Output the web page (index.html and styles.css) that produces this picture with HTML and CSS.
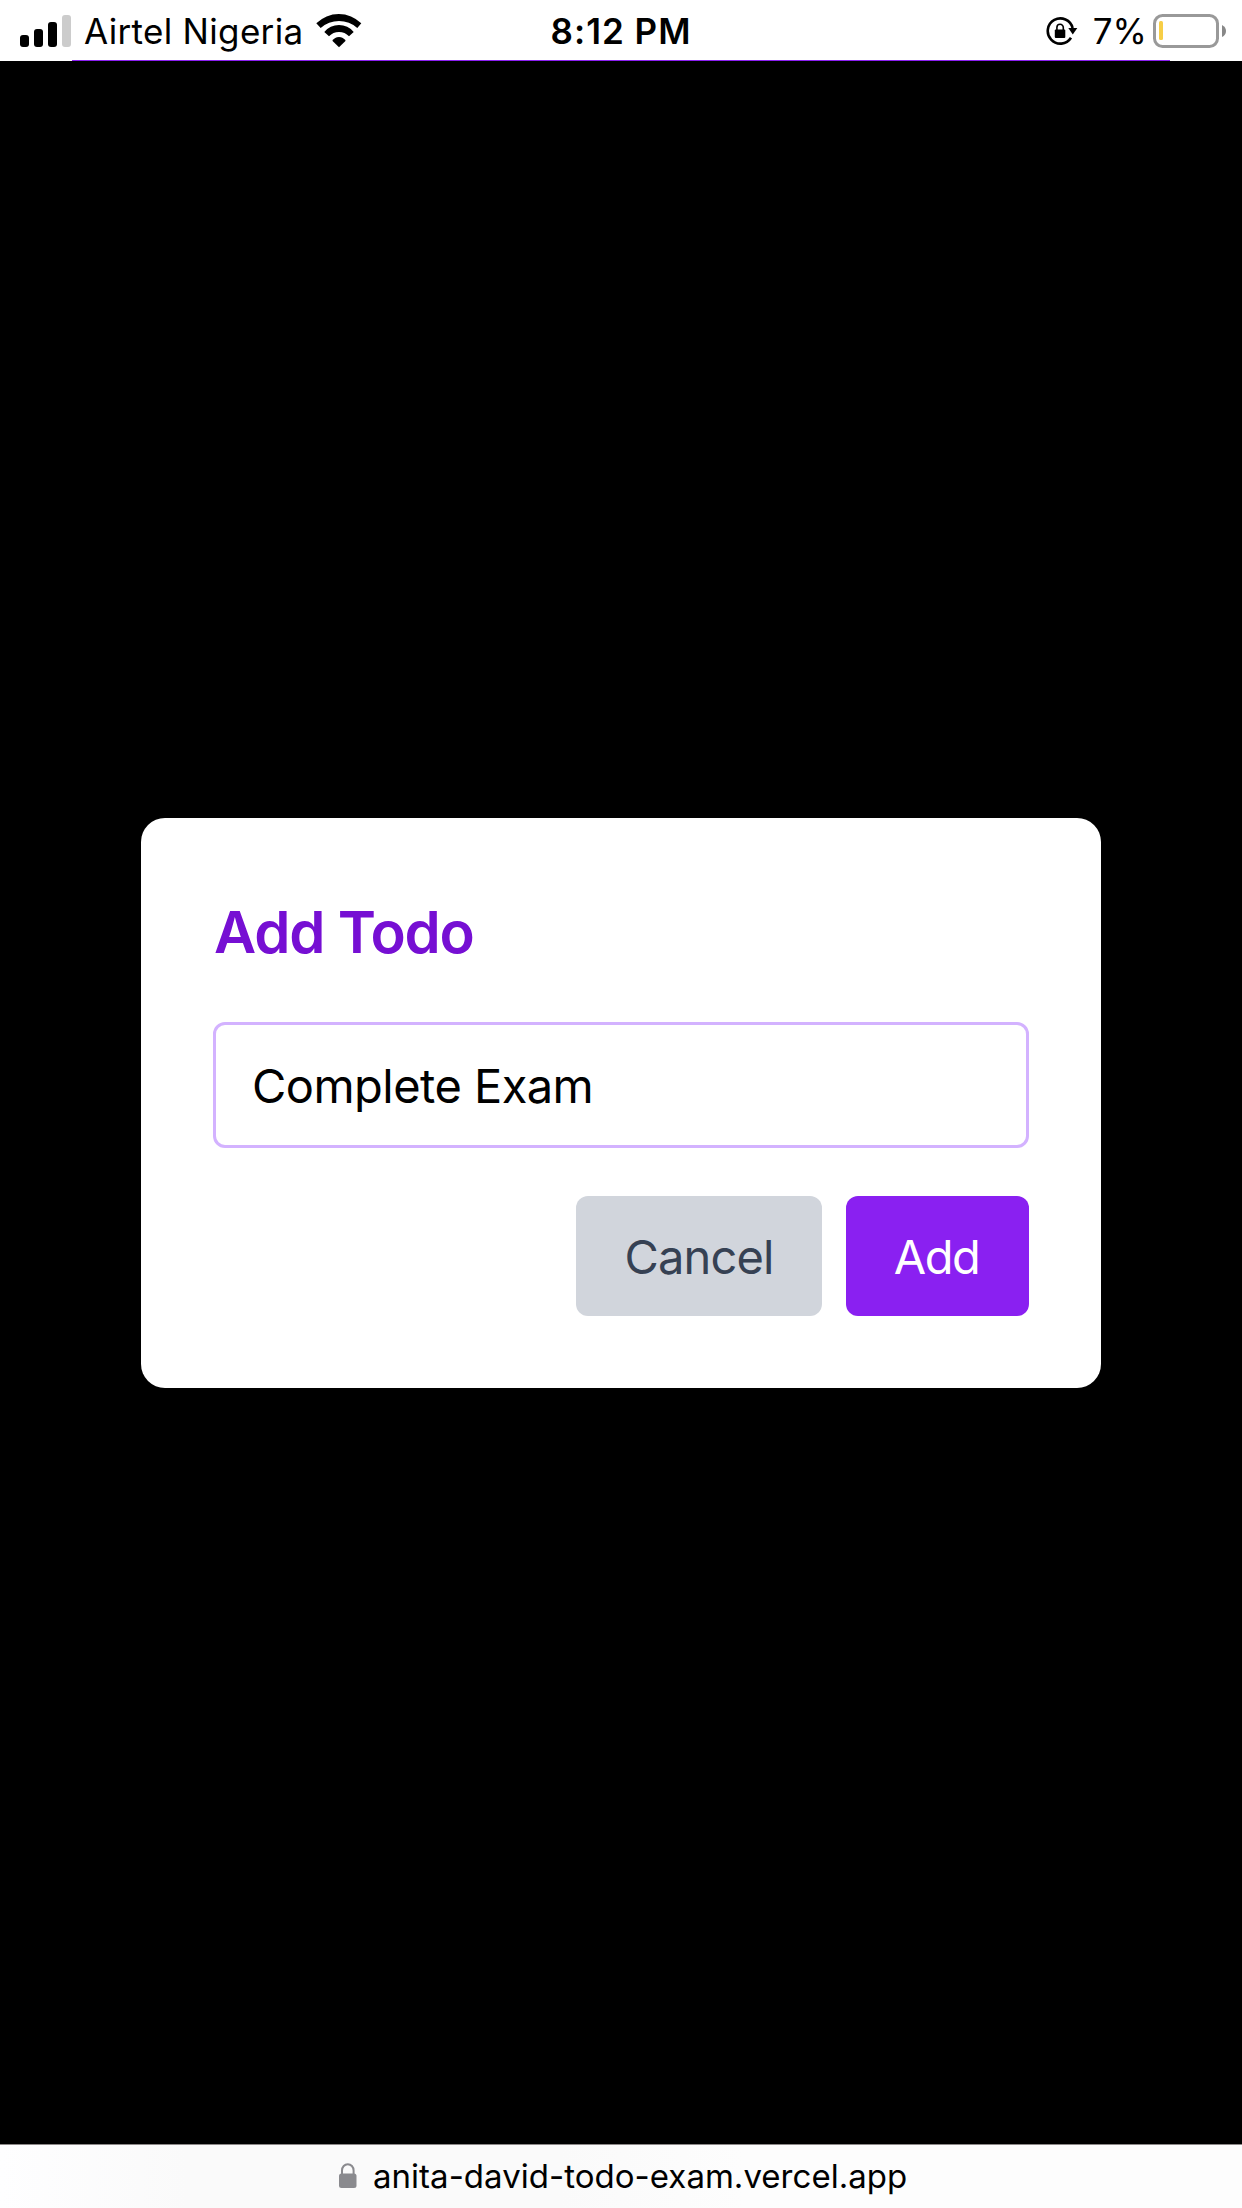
FILE: index.html
```html
<!DOCTYPE html>
<html lang="en">
<head>
<meta charset="utf-8">
<title>Todo</title>
<link rel="stylesheet" href="styles.css">
</head>
<body>
<header class="status">
  <div class="status-left">
    <svg class="signal" width="52" height="32" viewBox="0 0 52 32"><rect y="20" width="9" height="12" rx="3"/><rect x="14" y="14" width="9" height="18" rx="3"/><rect x="28" y="7" width="9" height="25" rx="3"/><rect x="42" width="9" height="32" rx="3" fill="#ccc"/></svg>
    <span class="carrier">Airtel Nigeria</span>
    <svg class="wifi" width="46" height="34" viewBox="0 0 46 34"><path d="M0.300 9.300A31.900 31.900 0 0 1 45.300 9.300L41.300 14A27.400 27.400 0 0 0 4.700 14Z"/><path d="M8.300 18A18.900 18.900 0 0 1 37.700 18L33 22.300A13.800 13.800 0 0 0 13 22.300Z"/><path d="M16.300 26.700A7.900 7.900 0 0 1 29.700 26.700L23 33.300Z"/></svg>
  </div>
  <span class="time">8:12 PM</span>
  <div class="status-right">
    <svg class="rotation" width="32" height="30" viewBox="0 0 32 30"><path d="M25 21.800A12.600 12.600 0 1 1 26.600 12" fill="none" stroke="#000" stroke-width="2.600"/><path d="M22.300 12H31.300L26.800 18.500Z"/><rect x="8.800" y="13.500" width="10.500" height="8.500" rx="1"/><path d="M10.900 14V11.500a3.200 3.200 0 0 1 6.400 0V14" fill="none" stroke="#000" stroke-width="1.600"/></svg>
    <span class="percent">7%</span>
    <svg class="battery" width="74" height="34" viewBox="0 0 74 34"><rect x="1.500" y="1.500" width="63" height="31" rx="8" fill="none" stroke="#999" stroke-width="3"/><rect x="6" y="7" width="4" height="19" rx="1.500" fill="#f7ce46"/><path d="M69 11q4 2 4 6t-4 6Z" fill="#888"/></svg>
  </div>
</header>
<main class="backdrop">
  <section class="dialog">
    <h1 class="title">Add Todo</h1>
    <input class="field" type="text" value="Complete Exam">
    <div class="actions">
      <button class="button cancel">Cancel</button>
      <button class="button add">Add</button>
    </div>
  </section>
</main>
<footer class="address">
  <svg class="lock" width="18" height="26" viewBox="0 0 18 26"><rect y="10.500" width="17.500" height="14.500" rx="2.500"/><path d="M3 12V7.500a5.800 6.300 0 0 1 11.600 0V12" fill="none" stroke="#8a8a8e" stroke-width="2"/></svg>
  <span class="url">anita-david-todo-exam.vercel.app</span>
</footer>
</body>
</html>
```
FILE: styles.css
```css
* {
  box-sizing: border-box;
}

body {
  margin: 0;
  height: 2208px;
  display: flex;
  flex-direction: column;
  font-family: Inter, "Liberation Sans", sans-serif;
  background: #fff;
}

svg {
  display: block;
  flex: none;
}

/* The 1px accent line runs along the bottom, inset 72px from both sides. */
.status {
  height: 61px;
  padding: 0 15px 0 20px;
  display: grid;
  grid-template-columns: 1fr auto 1fr;
  align-items: center;
  font-size: 35px;
  line-height: 58px;
  white-space: nowrap;
  background: linear-gradient(#8a1ff0, #8a1ff0) 72px 60px / 1098px 1px no-repeat #fff;
}

.status-left,
.status-right {
  display: flex;
  align-items: center;
}

.carrier {
  margin: 0 13px 0 12px;
  letter-spacing: 0.32px;
}

.time {
  margin-right: 5px;
  font-weight: 580;
  letter-spacing: 1px;
}

.status-right {
  justify-content: flex-end;
}

.rotation {
  margin-right: 15px;
}

.percent {
  margin-right: 6px;
}

.backdrop {
  flex: 1;
  display: flex;
  align-items: center;
  justify-content: center;
  padding-top: 1px;
  background: #000;
}

.dialog {
  width: 960px;
  height: 570px;
  padding: 72px;
  display: flex;
  flex-direction: column;
  background: #fff;
  border-radius: 24px;
}

.title {
  margin: 0 0 48px 1px;
  font-size: 58px;
  font-weight: 600;
  line-height: 84px;
  letter-spacing: -1.14px;
  color: #760fd3;
}

.field {
  width: 100%;
  height: 126px;
  padding: 0 36px;
  border: 3px solid #d3b2ff;
  border-radius: 12px;
  outline: 0;
  background: #fff;
  color: #000;
  font: 400 47px Inter, "Liberation Sans", sans-serif;
  letter-spacing: -0.54px;
}

.actions {
  margin-top: 48px;
  display: flex;
  justify-content: flex-end;
  gap: 24px;
}

.button {
  height: 120px;
  padding: 0;
  border: 0;
  border-radius: 12px;
  font: 400 47px Inter, "Liberation Sans", sans-serif;
}

.cancel {
  width: 246px;
  background: #d1d5dc;
  color: #364153;
  letter-spacing: -0.84px;
}

.add {
  width: 183px;
  padding-right: 2px;
  background: #8a20f1;
  color: #fff;
  letter-spacing: -1.5px;
}

.address {
  height: 64px;
  padding: 0 0 2px 339px;
  display: flex;
  align-items: center;
  gap: 16px;
  border-top: 1px solid #8c8888;
  background: linear-gradient(90deg, #fefeff, #fafafa 15%, #fafafa 45%, #fdfdfd 60%);
  font-size: 33px;
  line-height: 60px;
  letter-spacing: 0.03px;
}

.lock {
  fill: #8a8a8e;
}
```
